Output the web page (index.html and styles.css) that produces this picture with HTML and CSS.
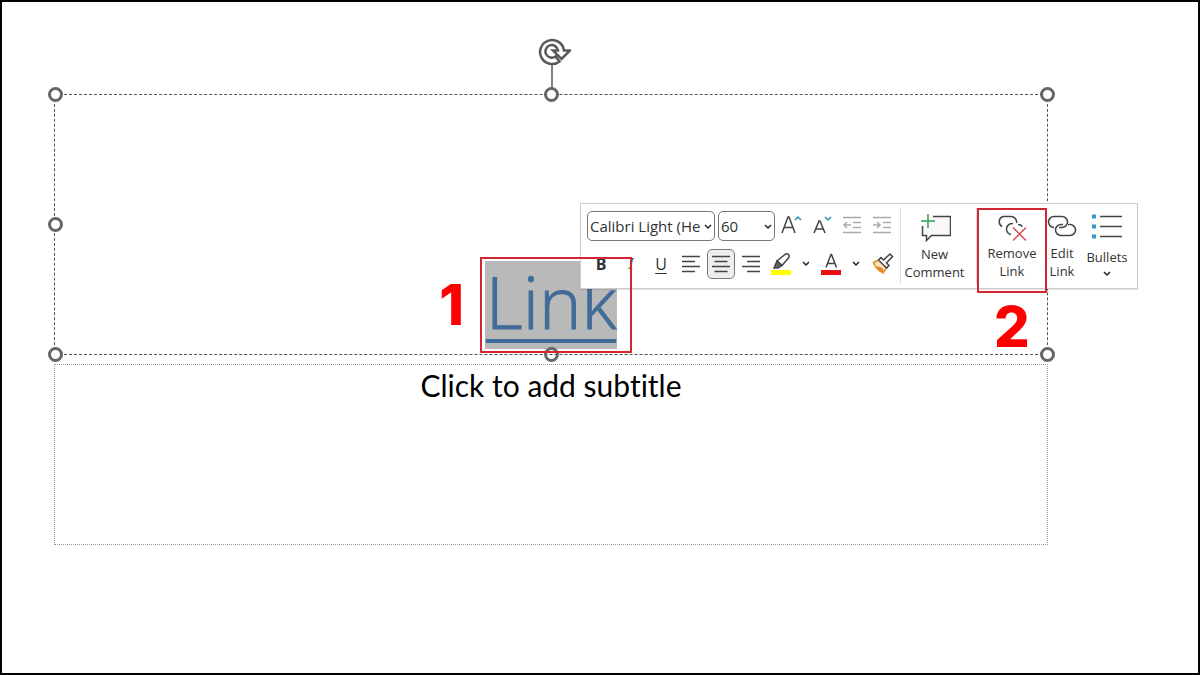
FILE: index.html
```html
<!DOCTYPE html>
<html lang="en">

<head>
    <meta charset="UTF-8">
    <meta name="viewport" content="width=device-width, initial-scale=1.0">
    <title>Remove Link</title>
    <link rel="stylesheet" href="styles.css">
</head>

<body>
    <main class="slide">
        <section class="title-box">
            <a class="title-link" href="#">Link</a>

            <svg class="rotate" width="36" height="58" viewBox="0 0 36 58">
                <path class="stem" d="M17 28v30" />
                <path d="M24.500 24.500A12 12 0 1 1 29 13.500H35L26.500 22 18 13.500H23A6.300 6.300 0 1 0 20.500 19.500Z" />
            </svg>
            <span class="handle top-left"></span>
            <span class="handle top-center"></span>
            <span class="handle top-right"></span>
            <span class="handle mid-left"></span>
            <span class="handle bottom-left"></span>
            <span class="handle bottom-center"></span>
            <span class="handle bottom-right"></span>

            <div class="toolbar">
                <div class="font-tools">
                    <div class="tool-row">
                        <div class="picker font-name">
                            <select aria-label="Font">
                                <option>Calibri Light (He</option>
                            </select>
                            <svg class="chevron" width="8" height="6" viewBox="0 0 8 6"><path d="M1 1l3 3 3-3" /></svg>
                        </div>
                        <div class="picker font-size">
                            <select aria-label="Font size">
                                <option>60</option>
                            </select>
                            <svg class="chevron" width="8" height="6" viewBox="0 0 8 6"><path d="M1 1l3 3 3-3" /></svg>
                        </div>
                        <button class="tool" aria-label="Increase font size">
                            <svg width="24" height="24" viewBox="0 0 24 24">
                                <path d="M2 19L8 3H9L15 19M4.500 13.500H12.500" />
                                <path class="blue" d="M15 6l3-3 3 3" />
                            </svg>
                        </button>
                        <button class="tool" aria-label="Decrease font size">
                            <svg width="24" height="24" viewBox="0 0 24 24">
                                <path d="M4 19L9 7H10L15 19M6 15H13" />
                                <path class="blue" d="M15 3l3 3 3-3" />
                            </svg>
                        </button>
                        <button class="tool" aria-label="Decrease indent">
                            <svg class="muted" width="24" height="24" viewBox="0 0 24 24">
                                <path d="M3 3.500H21M13 8.500H21M13 13.500H21M3 18.500H21M11 11H4M7 8l-3 3 3 3" />
                            </svg>
                        </button>
                        <button class="tool" aria-label="Increase indent">
                            <svg class="muted" width="24" height="24" viewBox="0 0 24 24">
                                <path d="M3 3.500H21M13 8.500H21M13 13.500H21M3 18.500H21M3 11H10M7 8l3 3-3 3" />
                            </svg>
                        </button>
                    </div>
                    <div class="tool-row">
                        <button class="tool bold">B</button>
                        <button class="tool italic">I</button>
                        <button class="tool underline">U</button>
                        <button class="tool" aria-label="Align left">
                            <svg width="24" height="24" viewBox="0 0 24 24"><path d="M3 4.500H21M3 9.500H16M3 14.500H21M3 19.500H16" /></svg>
                        </button>
                        <button class="tool active" aria-label="Center">
                            <svg width="24" height="24" viewBox="0 0 24 24"><path d="M3 4.500H21M5.500 9.500H18.500M3 14.500H21M5.500 19.500H18.500" /></svg>
                        </button>
                        <button class="tool" aria-label="Align right">
                            <svg width="24" height="24" viewBox="0 0 24 24"><path d="M3 4.500H21M8 9.500H21M3 14.500H21M8 19.500H21" /></svg>
                        </button>
                        <button class="tool" aria-label="Highlight color">
                            <svg width="24" height="24" viewBox="0 0 24 24">
                                <path class="marker" d="M5 16L8 9L13 13.500L9 16Z" />
                                <path d="M8 9L16 2.500Q18 1 19.500 2.500T19.500 6L13 13.500Z" />
                                <path class="swatch yellow" d="M2 20.500H22" />
                            </svg>
                        </button>
                        <button class="tool narrow" aria-label="Highlight options">
                            <svg class="chevron" width="8" height="6" viewBox="0 0 8 6"><path d="M1 1l3 3 3-3" /></svg>
                        </button>
                        <button class="tool" aria-label="Font color">
                            <svg width="24" height="24" viewBox="0 0 24 24">
                                <path d="M7 15.500L12 2.500H12.500L17.500 15.500M8.500 11.500H16" />
                                <path class="swatch red" d="M2 20.500H22" />
                            </svg>
                        </button>
                        <button class="tool narrow" aria-label="Font color options">
                            <svg class="chevron" width="8" height="6" viewBox="0 0 8 6"><path d="M1 1l3 3 3-3" /></svg>
                        </button>
                        <button class="tool painter" aria-label="Format painter">
                            <svg width="24" height="24" viewBox="0 0 24 24">
                                <path class="bristle" d="M2.500 10.500L9 7.500L16.500 15L12 20.500Q5 18 2.500 10.500Z" />
                                <path class="bristle-tip" d="M6 15L11 16.500L12 20.500Z" />
                                <path class="grip" d="M10 5.500L12.500 8L19 2L21.500 4.500L15.500 11L18 13.500L15.500 16L7.500 8Z" />
                            </svg>
                        </button>
                    </div>
                </div>

                <button class="big-tool comment">
                    <svg width="32" height="32" viewBox="0 0 32 32">
                        <path class="bubble" d="M14 4.500H31.500V23.500H12.500L7.500 28.500V23.500H3.500V14" />
                        <path class="plus" d="M9 2V16M2 9H16" />
                    </svg>
                    <span>New<br>Comment</span>
                </button>
                <button class="big-tool remove">
                    <svg width="32" height="32" viewBox="0 0 32 32">
                        <path d="M6 14.500A5.500 5.500 0 0 1 7 4.500H15A5.500 5.500 0 0 1 20.500 11M15 22.500A5.500 5.500 0 0 1 13 12.500Q14 11.500 17 11.500M22 12.500Q25 12.500 26.500 14.500" />
                        <path class="cross" d="M17 15.500L30 28.500M30 15.500L17 28.500" />
                    </svg>
                    <span>Remove<br>Link</span>
                    <strong class="step">2</strong>
                </button>
                <button class="big-tool edit">
                    <svg width="30" height="32" viewBox="0 0 30 32">
                        <path d="M7 15.500A5.500 5.500 0 0 1 7 4.500H15A5.500 5.500 0 0 1 15 15.500H12M21 12.500H23A5.500 5.500 0 0 1 23 23.500H14A5.500 5.500 0 0 1 14 12.500H16" />
                    </svg>
                    <span>Edit<br>Link</span>
                </button>
                <button class="big-tool bullets">
                    <svg width="32" height="32" viewBox="0 0 32 32">
                        <path d="M9 4.500H31M9 14.500H31M9 24.500H31" />
                        <path class="dots" d="M1 4.500H5M1 14.500H5M1 24.500H5" />
                    </svg>
                    <span>Bullets</span>
                    <svg class="chevron" width="8" height="6" viewBox="0 0 8 6"><path d="M1 1l3 3 3-3" /></svg>
                </button>
            </div>

            <div class="link-frame">
                <strong class="step">1</strong>
            </div>
        </section>

        <section class="subtitle-box">
            <p>Click to add subtitle</p>
        </section>
    </main>
</body>

</html>
```

FILE: styles.css
```css
* {
    box-sizing: border-box;
}

body {
    margin: 0;
    font-family: "Open Sans", "Noto Sans", sans-serif;
    color: #333;
}

.slide {
    min-height: 100vh;
    padding: 92px 150px 20px 52px;
    background: #fff;
    border: 2px solid #000;
}

.title-box {
    position: relative;
    display: flex;
    align-items: flex-end;
    justify-content: center;
    height: 261px;
    padding-bottom: 5px;
    border: 1px dashed #555;
}

.title-link {
    height: 88px;
    padding: 0 1px;
    background: #b9b9b9;
    color: #426c98;
    font-size: 72px;
    font-weight: 300;
    line-height: 80px;
    text-decoration: underline;
    text-decoration-thickness: 4px;
    text-underline-offset: 10px;
    -webkit-text-stroke: 1px #426c98;
}

.subtitle-box {
    height: 181px;
    margin-top: 9px;
    border: 1px dotted #999;
}

.subtitle-box p {
    margin: 0;
    color: #000;
    font-family: Lato, sans-serif;
    font-size: 30px;
    font-variant-ligatures: none;
    line-height: 40px;
    text-align: center;
}

/* selection handles */
.handle {
    position: absolute;
    width: 15px;
    height: 15px;
    background: #fff;
    border: 3px solid #666;
    border-radius: 50%;
}

.top-left,
.top-center,
.top-right {
    top: -8px;
}

.bottom-left,
.bottom-center,
.bottom-right {
    bottom: -8px;
}

.top-left,
.mid-left,
.bottom-left {
    left: -7px;
}

.top-right,
.bottom-right {
    right: -8px;
}

.top-center,
.bottom-center {
    left: calc(50% - 7px);
}

.bottom-center {
    background: none;
}

.mid-left {
    top: calc(50% - 8px);
}

.rotate {
    position: absolute;
    top: -58px;
    left: calc(50% - 16px);
}

/* mini toolbar */
.toolbar {
    position: absolute;
    top: 108px;
    left: calc(50% + 29px);
    z-index: 1;
    display: flex;
    width: 558px;
    height: 86px;
    background: #fff;
    border: 1px solid #ccc;
    box-shadow: 0 1px 1px rgba(0, 0, 0, 0.1);
}

.font-tools {
    display: flex;
    flex-direction: column;
    gap: 8px;
    width: 320px;
    padding: 7px 0 0 6px;
}

.tool-row {
    display: flex;
    align-items: center;
    height: 30px;
}

.picker {
    position: relative;
    margin-right: 3px;
}

.font-name {
    width: 128px;
}

.font-size {
    width: 57px;
}

.picker select {
    appearance: none;
    display: block;
    width: 100%;
    height: 30px;
    padding: 0 0 0 2px;
    background: #fff;
    border: 1px solid #777;
    border-radius: 5px;
    color: #333;
    font-family: inherit;
    font-size: 15px;
}

.picker .chevron {
    position: absolute;
    top: 13px;
    right: 3px;
}

button {
    padding: 0;
    background: none;
    border: none;
    color: #333;
    font-family: inherit;
    cursor: pointer;
}

svg path {
    fill: none;
    stroke: #444;
    stroke-width: 1.5;
}

.rotate path {
    fill: #fff;
    stroke: #595959;
    stroke-width: 2.5;
}

.rotate .stem {
    stroke-width: 1.5;
}

.chevron path {
    stroke: #222;
}

.muted path {
    stroke: #aaa;
}

svg .blue {
    stroke: #2591b5;
}

svg .marker {
    fill: #666;
}

svg .swatch {
    stroke-width: 5;
}

svg .yellow {
    stroke: #ffff00;
}

svg .red {
    stroke: #e81010;
}

svg .bristle {
    fill: #ffe3b3;
    stroke: #e08a2c;
}

svg .bristle-tip {
    fill: #f0a040;
    stroke: #e08a2c;
}

svg .grip {
    fill: #fff;
}

svg .bubble {
    fill: #f8f8f8;
}

svg .plus {
    stroke: #2fa34a;
}

svg .cross {
    stroke: #e04848;
}

svg .dots {
    stroke: #3a96d0;
    stroke-width: 4;
}

.tool {
    display: flex;
    flex: none;
    align-items: center;
    justify-content: center;
    width: 28px;
    height: 30px;
    margin-right: 2px;
    font-size: 16px;
}

.narrow {
    width: 18px;
}

.painter {
    margin-left: 2px;
}

.bold {
    font-weight: bold;
}

.italic {
    font-family: "Liberation Serif", serif;
    font-style: italic;
}

.underline {
    text-decoration: underline;
    text-underline-offset: 3px;
}

.active {
    background: #eee;
    border: 1px solid #777;
    border-radius: 5px;
}

.big-tool {
    display: flex;
    flex: none;
    flex-direction: column;
    align-items: center;
    padding-top: 8px;
    font-size: 13px;
    line-height: 18px;
}

.big-tool span {
    margin-top: 1px;
}

.comment {
    width: 77px;
    height: 76px;
    margin-top: 4px;
    padding-top: 4px;
    padding-right: 8px;
    border: solid #ddd;
    border-width: 0 1px;
}

.remove {
    position: relative;
    width: 70px;
    height: 85px;
    margin-top: 4px;
    padding-top: 2px;
    border: 2px solid #d22630;
}

.remove span {
    margin-top: 0;
}

.edit {
    width: 30px;
}

.edit span {
    margin-top: 0;
}

.bullets {
    width: 60px;
}

.bullets span {
    margin: 4px 0 5px;
}

/* numbered callouts */
.link-frame {
    position: absolute;
    bottom: 1px;
    left: calc(50% - 71px);
    z-index: 2;
    width: 152px;
    height: 96px;
    border: 2px solid #d22630;
    pointer-events: none;
}

.step {
    position: absolute;
    color: #f00;
    font-family: Inter, sans-serif;
    font-size: 56px;
    font-weight: 800;
    line-height: 56px;
}

.link-frame .step {
    top: 18px;
    right: 166px;
}

.remove .step {
    top: 89px;
    left: 15px;
}
```
